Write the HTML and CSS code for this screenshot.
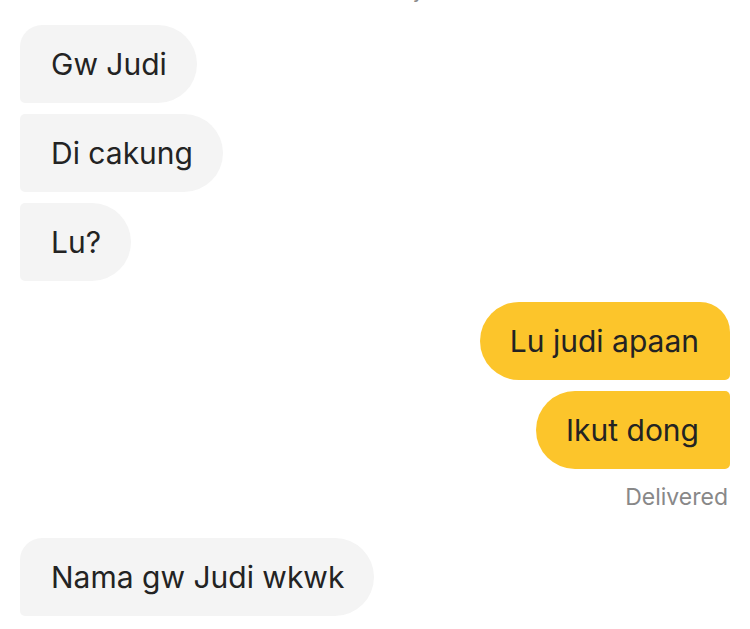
FILE: index.html
```html
<!DOCTYPE html>
<html>
<head>
<meta charset="utf-8">
<link rel="stylesheet" href="styles.css">
</head>
<body>
<div class="chat">
  <div class="stamp"><span>Today</span></div>
  <div class="group in">
    <div class="bubble first">Gw Judi</div>
    <div class="bubble">Di cakung</div>
    <div class="bubble">Lu?</div>
  </div>
  <div class="group out">
    <div class="bubble first">Lu judi apaan</div>
    <div class="bubble">Ikut dong</div>
    <div class="status">Delivered</div>
  </div>
  <div class="group in last">
    <div class="bubble first">Nama gw Judi wkwk</div>
  </div>
</div>
</body>
</html>
```
FILE: styles.css
```css
* { box-sizing: border-box; }
html, body { margin: 0; padding: 0; background: #fff; }
body {
  font-family: Inter, "Noto Sans", sans-serif;
  width: 750px;
  height: 629px;
  overflow: hidden;
}
.chat {
  display: flex;
  flex-direction: column;
  padding: 0 20px;
}
.stamp {
  height: 25px;
  overflow: hidden;
  text-align: center;
  font-size: 20px;
  color: #8a8a8a;
  padding-left: 40px;
}
.stamp span {
  display: block;
  line-height: 20px;
  margin-top: -19px;
}
.group {
  display: flex;
  flex-direction: column;
  gap: 11px;
}
.group.in { align-items: flex-start; }
.group.out { align-items: flex-end; margin-top: 21px; }
.group.last { margin-top: 27px; }
.bubble {
  height: 78px;
  display: flex;
  align-items: center;
  padding: 0 30px 0 31px;
  font-size: 30px;
  color: #232323;
}
.in .bubble {
  background: #f4f4f4;
  border-radius: 5px 39px 39px 5px;
}
.in .bubble.first { border-top-left-radius: 22px; }
.out .bubble {
  background: #fcc52b;
  border-radius: 39px 5px 5px 39px;
  padding: 0 31px 0 30px;
}
.out .bubble.first { border-top-right-radius: 30px; }
.status {
  font-size: 23px;
  line-height: 28px;
  color: #888;
  margin-top: 3px;
  padding-right: 2px;
}
```
